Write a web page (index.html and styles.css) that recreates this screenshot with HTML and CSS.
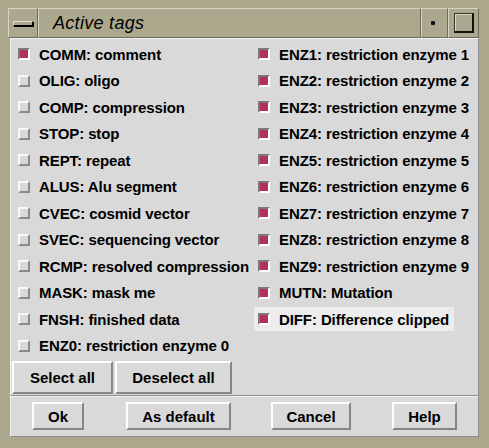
FILE: index.html
```html
<!DOCTYPE html>
<html>
<head>
<meta charset="utf-8">
<link rel="stylesheet" href="styles.css">
</head>
<body>
<div class="frame">
  <div class="titlebar">
    <div class="tb-btn menu"><span class="bar"></span></div>
    <div class="tb-title">Active tags</div>
    <div class="tb-btn min"><span class="dot"></span></div>
    <div class="tb-btn max"><span class="sq"></span></div>
  </div>
  <div class="client">
    <div class="upper">
      <div class="tags">
        <div class="tag"><span class="cb on"></span>COMM: comment</div>
        <div class="tag"><span class="cb"></span>OLIG: oligo</div>
        <div class="tag"><span class="cb"></span>COMP: compression</div>
        <div class="tag"><span class="cb"></span>STOP: stop</div>
        <div class="tag"><span class="cb"></span>REPT: repeat</div>
        <div class="tag"><span class="cb"></span>ALUS: Alu segment</div>
        <div class="tag"><span class="cb"></span>CVEC: cosmid vector</div>
        <div class="tag"><span class="cb"></span>SVEC: sequencing vector</div>
        <div class="tag"><span class="cb"></span>RCMP: resolved compression</div>
        <div class="tag"><span class="cb"></span>MASK: mask me</div>
        <div class="tag"><span class="cb"></span>FNSH: finished data</div>
        <div class="tag"><span class="cb"></span>ENZ0: restriction enzyme 0</div>
        <div class="tag"><span class="cb on"></span>ENZ1: restriction enzyme 1</div>
        <div class="tag"><span class="cb on"></span>ENZ2: restriction enzyme 2</div>
        <div class="tag"><span class="cb on"></span>ENZ3: restriction enzyme 3</div>
        <div class="tag"><span class="cb on"></span>ENZ4: restriction enzyme 4</div>
        <div class="tag"><span class="cb on"></span>ENZ5: restriction enzyme 5</div>
        <div class="tag"><span class="cb on"></span>ENZ6: restriction enzyme 6</div>
        <div class="tag"><span class="cb on"></span>ENZ7: restriction enzyme 7</div>
        <div class="tag"><span class="cb on"></span>ENZ8: restriction enzyme 8</div>
        <div class="tag"><span class="cb on"></span>ENZ9: restriction enzyme 9</div>
        <div class="tag"><span class="cb on"></span>MUTN: Mutation</div>
        <div class="tag active"><span class="cb on"></span>DIFF: Difference clipped</div>
      </div>
      <div class="sel-row">
        <button class="btn sel">Select all</button>
        <button class="btn desel">Deselect all</button>
      </div>
    </div>
    <div class="lower">
      <button class="btn ok">Ok</button>
      <button class="btn asdef">As default</button>
      <button class="btn cancel">Cancel</button>
      <button class="btn help">Help</button>
    </div>
  </div>
</div>
</body>
</html>
```

FILE: styles.css
```css
html, body {
  margin: 0;
  padding: 0;
  background: #aca88e;
}

.frame {
  width: 489px;
  height: 448px;
  box-sizing: border-box;
  padding: 8px 10px 11px 8px;
  background: #aca88e;
  display: flex;
  flex-direction: column;
  font-family: "Liberation Sans", Arial, sans-serif;
  font-weight: bold;
  font-size: 15px;
  color: #000;
}

.titlebar {
  height: 30px;
  display: flex;
  flex: none;
}

.tb-btn, .tb-title {
  box-sizing: border-box;
  border-top: 1px solid #d8d5c2;
  border-left: 1px solid #d8d5c2;
  border-bottom: 1px solid #6e6b58;
  border-right: 1px solid #6e6b58;
  background: #aca88e;
  display: flex;
  align-items: center;
  justify-content: center;
}

.menu {
  width: 30px;
}

.menu .bar {
  width: 20px;
  height: 5px;
  box-sizing: border-box;
  border: 1px solid #000;
  border-top-color: #e6e3d2;
  border-left-color: #e6e3d2;
  background: #aca88e;
  box-shadow: 1px 1px 0 #000;
}

.tb-title {
  flex: 1;
  justify-content: flex-start;
  padding-left: 14px;
  font-style: italic;
  font-weight: normal;
  font-size: 18px;
  letter-spacing: 0.3px;
  color: #000;
}

.min {
  width: 27px;
}

.min .dot {
  width: 4px;
  height: 4px;
  background: #111;
  border-radius: 1px;
  margin-left: -3px;
}

.max {
  width: 31px;
}

.max .sq {
  width: 20px;
  height: 20px;
  box-sizing: border-box;
  border-top: 1px solid #333;
  border-left: 1px solid #333;
  border-right: 2px solid #111;
  border-bottom: 2px solid #111;
  box-shadow: inset 1px 1px 0 #dedbc8;
}

.client {
  margin-left: 2px;
  flex: 1;
  display: flex;
  flex-direction: column;
  background: #d9d9d9;
}

.upper {
  box-sizing: border-box;
  height: 358px;
  padding: 3px 0 0 3px;
  border-top: 1px solid #f2f2f2;
  border-left: 1px solid #f2f2f2;
  border-right: 1px solid #8c8c8c;
  border-bottom: 1px solid #8c8c8c;
}

.tags {
  display: grid;
  grid-template-columns: 240px 1fr;
  grid-template-rows: repeat(12, 24px);
  row-gap: 2.5px;
  grid-auto-flow: column;
}

.tag {
  justify-self: start;
  display: flex;
  align-items: center;
  gap: 9px;
  padding: 0 5px 0 4px;
  white-space: nowrap;
  letter-spacing: -0.1px;
}

.tag.active {
  background: #ececec;
}

.cb {
  width: 12px;
  height: 12px;
  box-sizing: border-box;
  flex: none;
  border-top: 2px solid #f8f8f8;
  border-left: 2px solid #f8f8f8;
  border-bottom: 2px solid #8a8a8a;
  border-right: 2px solid #8a8a8a;
  background: #d9d9d9;
}

.cb.on {
  border-top-color: #7a7a7a;
  border-left-color: #7a7a7a;
  border-bottom-color: #ffffff;
  border-right-color: #ffffff;
  background: #b03060;
}

.sel-row {
  display: flex;
  gap: 2px;
  margin: 3.5px 0 0 -2px;
}

.btn {
  box-sizing: border-box;
  font-family: "Liberation Sans", Arial, sans-serif;
  font-weight: bold;
  font-size: 15px;
  color: #000;
  background: #d9d9d9;
  border-top: 2px solid #ffffff;
  border-left: 2px solid #ffffff;
  border-bottom: 2px solid #858585;
  border-right: 2px solid #858585;
  outline: 1px solid #d9d9d9;
  padding: 0;
  margin: 0;
}

.sel {
  width: 101px;
  height: 33px;
}

.desel {
  width: 117px;
  height: 33px;
}

.lower {
  flex: 1;
  box-sizing: border-box;
  border-top: 1px solid #f2f2f2;
  border-left: 1px solid #f2f2f2;
  border-right: 1px solid #8c8c8c;
  border-bottom: 1px solid #8c8c8c;
  display: flex;
  align-items: flex-start;
  padding: 5px 0 0 21px;
}

.lower .btn {
  height: 28px;
}

.ok {
  width: 52px;
}

.asdef {
  width: 105px;
  margin-left: 42px;
}

.cancel {
  width: 80px;
  margin-left: 40px;
}

.help {
  width: 65px;
  margin-left: 41px;
}
```
